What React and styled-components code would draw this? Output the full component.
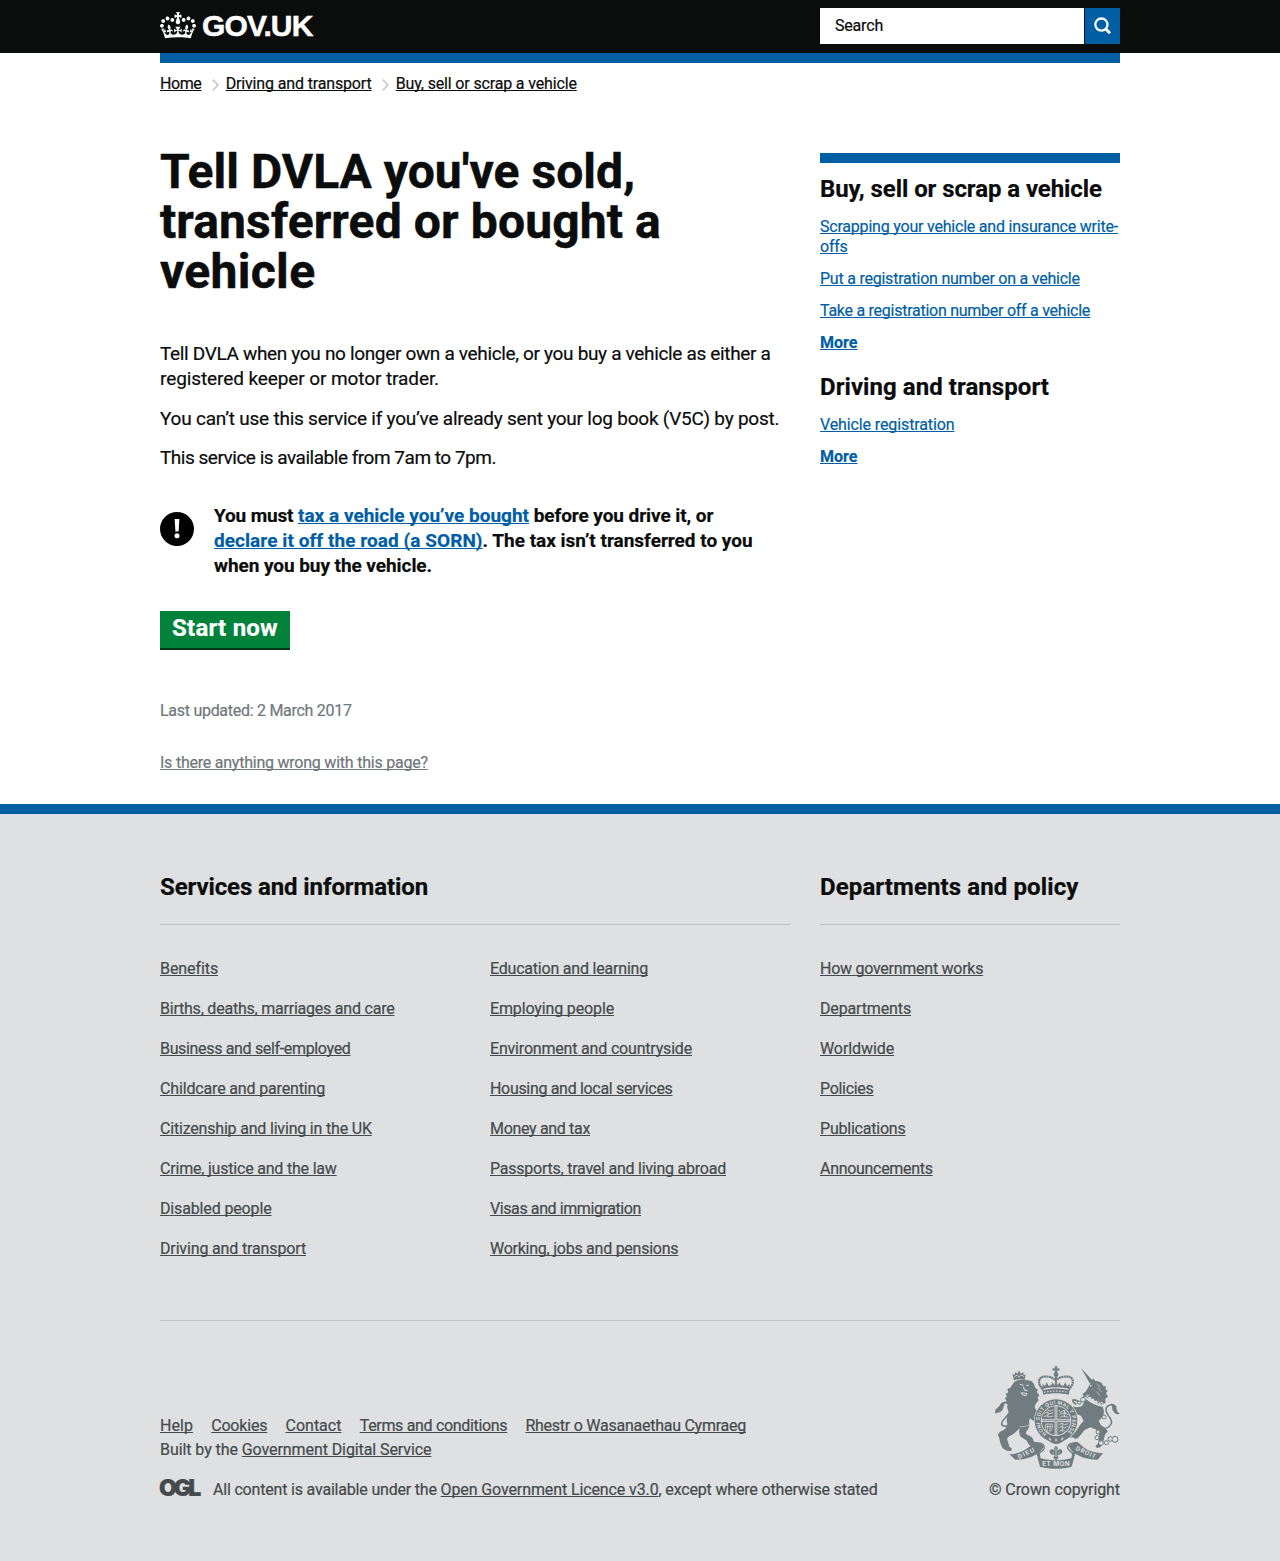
import React from "react";
import styled, { createGlobalStyle, css } from "styled-components";

const colour = {
  black: "#0b0c0c",
  blue: "#005ea5",
  green: "#00823b",
  greenDark: "#003618",
  grey: "#6f777b",
  rule: "#bfc1c3",
  footer: "#dee0e2",
  footerText: "#454a4c",
  arms: "#707c7f",
};

const GlobalStyle = createGlobalStyle`
  *, *::before, *::after { box-sizing: border-box; }
  body {
    margin: 0;
    background: #fff;
    color: ${colour.black};
    font: 400 16px/20px Roboto, "Liberation Sans", sans-serif;
    -webkit-text-stroke: 0.2px;
  }
  svg { -webkit-text-stroke: 0; }
  h1, h2, p, ul { margin: 0; padding: 0; }
  ul { list-style: none; }
`;

const tracking = css`
  letter-spacing: ${(p) => p.$track || 0}px;
`;

const Track = styled.span`
  ${tracking}
  white-space: pre;
`;

const Link = styled.a`
  ${tracking}
  color: ${(p) => p.$color || colour.blue};
  font-weight: ${(p) => (p.$bold ? 700 : "inherit")};
  text-decoration: underline;
  text-decoration-thickness: 1px;
  text-decoration-skip-ink: none;
  text-underline-offset: 1px;
`;

const Header = styled.header`
  height: 53px;
  background: ${colour.black};
`;

const Width = styled.div`
  width: 960px;
  margin: 0 auto;
`;

const HeaderRow = styled(Width)`
  display: flex;
  justify-content: space-between;
  align-items: flex-start;
`;

const Logo = styled.a`
  display: flex;
  gap: 6px;
  padding-top: 12px;
  color: #fff;
`;

const LogoText = styled.span`
  margin-top: -1px;
  font: 700 30px/30px "Liberation Sans", Arial, sans-serif;
  letter-spacing: -0.85px;
  -webkit-text-stroke: 0.5px;
`;

const SearchForm = styled.form`
  display: flex;
  gap: 1px;
  width: 300px;
  height: 36px;
  margin-top: 8px;
`;

const SearchField = styled.div`
  flex: 1;
  padding: 8px 15px;
  background: #fff;
`;

const SearchButton = styled.button`
  display: flex;
  align-items: center;
  justify-content: center;
  width: 35px;
  padding: 0;
  border: 0;
  background: ${colour.blue};
`;

const BlueBar = styled.div`
  height: 10px;
  background: ${colour.blue};
`;

const Breadcrumbs = styled.nav`
  display: flex;
  padding-top: 11px;
`;

const Chevron = styled.svg`
  display: block;
  width: 7px;
  height: 12px;
  margin: 5px 7px 0 10.2px;
`;

const Columns = styled.div`
  display: grid;
  grid-template-columns: 630px 300px;
  column-gap: 30px;
`;

const Article = styled.main`
  padding: 53px 0 31px;
`;

const Title = styled.h1`
  margin-bottom: 44px;
  font-size: 48px;
  line-height: 50px;
  font-weight: 700;
  -webkit-text-stroke: 0.5px;
`;

const Line = styled.span`
  display: block;
  white-space: pre;
  ${tracking}
`;

const Paragraph = styled.p`
  margin-bottom: ${(p) => p.$gap || 15}px;
  font-size: 19px;
  line-height: 25px;
`;

const Callout = styled.div`
  display: flex;
  gap: 20px;
  font-size: 19px;
  line-height: 25px;
  font-weight: 700;
`;

const CalloutIcon = styled.svg`
  width: 34px;
  height: 34px;
  margin-top: 9px;
`;

const StartButton = styled.a`
  display: block;
  width: 130px;
  height: 39px;
  margin-top: 33px;
  padding: 1px 12px 0;
  border-bottom: 2px solid ${colour.greenDark};
  background: ${colour.green};
  color: #fff;
  font-size: 24px;
  line-height: 32px;
  font-weight: 700;
`;

const Meta = styled.p`
  margin-top: ${(p) => p.$top}px;
  color: ${colour.grey};
`;

const Aside = styled.aside`
  padding-top: 59px;
`;

const AsideHeading = styled.h2`
  margin: ${(p) => p.$top}px 0 13px;
  font-size: 24px;
  line-height: 30px;
  font-weight: 700;
`;

const AsideList = styled.ul`
  display: flex;
  flex-direction: column;
  gap: 12px;
`;

const Footer = styled.footer`
  height: 757px;
  border-top: 10px solid ${colour.blue};
  background: ${colour.footer};
  color: ${colour.footerText};
`;

const FooterHeading = styled.h2`
  height: 111px;
  padding-top: 58px;
  border-bottom: 1px solid ${colour.rule};
  color: ${colour.black};
  font-size: 24px;
  line-height: 30px;
  font-weight: 700;
`;

const FooterLists = styled.div`
  display: grid;
  grid-template-columns: repeat(${(p) => p.$cols}, 300px);
  column-gap: 30px;
  padding-top: 34px;
`;

const FooterList = styled.ul`
  display: flex;
  flex-direction: column;
  gap: 20px;
`;

const FooterMeta = styled.div`
  display: flex;
  justify-content: space-between;
  margin-top: 61px;
  border-top: 1px solid ${colour.rule};
`;

const MetaLeft = styled.div`
  padding-top: 95px;
`;

const MetaLinks = styled.ul`
  display: flex;
  justify-content: space-between;
  width: 586px;
`;

const BuiltBy = styled.p`
  margin-top: 4px;
`;

const Licence = styled.div`
  display: flex;
  margin-top: 17px;
`;

const Ogl = styled.span`
  width: 54px;
  margin-left: -1px;
  font: 900 23px/22px Inter, sans-serif;
  letter-spacing: -3px;
`;

const LicenceText = styled.p`
  padding-top: 3px;
  white-space: pre;
`;

const Copyright = styled.div`
  display: flex;
  flex-direction: column;
  align-items: flex-end;
  gap: 11px;
  padding-top: 45px;
`;

const Crown = () => (
  <svg width="36" height="26.5" viewBox="0 0 132 97" fill="currentColor">
    <path d="M25 30.2c3.5 1.5 7.7-.2 9.1-3.7 1.5-3.6-.2-7.8-3.9-9.2-3.6-1.4-7.6.3-9.1 3.9-1.4 3.5.3 7.5 3.9 9zM9 39.5c3.6 1.5 7.8-.2 9.2-3.7 1.5-3.6-.2-7.8-3.9-9.1-3.6-1.5-7.6.2-9.1 3.8-1.4 3.5.3 7.5 3.8 9zM4.4 57.2c3.5 1.5 7.7-.2 9.1-3.8 1.5-3.6-.2-7.7-3.9-9.1-3.5-1.5-7.6.3-9.1 3.8-1.4 3.5.3 7.6 3.9 9.1zm38.3-21.4c3.5 1.5 7.7-.2 9.1-3.8 1.5-3.6-.2-7.7-3.9-9.1-3.6-1.5-7.6.3-9.1 3.8-1.3 3.6.4 7.7 3.9 9.1zm64.4-5.6c-3.6 1.5-7.8-.2-9.1-3.7-1.5-3.6.2-7.8 3.8-9.2 3.6-1.4 7.7.3 9.2 3.9 1.3 3.5-.4 7.5-3.9 9zm15.9 9.3c-3.6 1.5-7.7-.2-9.1-3.7-1.5-3.6.2-7.8 3.7-9.1 3.6-1.5 7.7.2 9.2 3.8 1.5 3.5-.3 7.5-3.8 9zm4.7 17.7c-3.6 1.5-7.8-.2-9.2-3.8-1.5-3.6.2-7.7 3.9-9.1 3.6-1.5 7.7.3 9.2 3.8 1.3 3.5-.4 7.6-3.9 9.1zM89.3 35.8c-3.6 1.5-7.8-.2-9.2-3.8-1.4-3.6.2-7.7 3.9-9.1 3.6-1.5 7.7.3 9.2 3.8 1.4 3.6-.3 7.7-3.9 9.1zM69.7 17.7l8.9 4.7V9.3l-8.9 2.8c-.2-.3-.5-.6-.9-.9L72.4 0H59.6l3.5 11.2c-.3.3-.6.5-.9.9l-8.8-2.8v13.1l8.8-4.7c.3.3.6.7.9.9l-5 15.4v.1c-.2.8-.4 1.6-.4 2.4 0 4.1 3.1 7.5 7 8.1h.2c.3 0 .7.1 1 .1.4 0 .7 0 1-.1h.2c4-.6 7.1-4.1 7.1-8.1 0-.8-.1-1.7-.4-2.4V34l-5.1-15.4c.4-.2.7-.6 1-.9zM66 92.8c16.9 0 32.8 1.1 47.1 3.2 4-16.9 8.9-26.7 14-33.5l-9.6-3.4c1 4.9 1.1 7.2 0 10.2-1.5-1.4-3-4.3-4.2-8.7L108.6 76c2.8-2 5-3.2 7.5-3.3-4.4 9.4-10 11.9-13.6 11.2-4.3-.8-6.3-4.6-5.6-7.9 1-4.7 5.7-5.9 8-.5 4.3-8.7-3-11.4-7.6-8.8 7.1-7.2 7.9-13.5 2.1-21.1-8 6.1-8.1 12.3-4.5 20.8-4.7-5.4-12.1-2.5-9.5 6.2 3.4-5.2 7.9-2 7.2 3.1-.6 4.3-6.4 7.8-13.5 7.2-10.3-.9-10.9-8-11.2-13.8 2.5-.5 7.1 1.8 11 7.3L80.2 60c-4.1 4.4-8 5.3-12.3 5.4 1.4-4.4 8-11.6 8-11.6H55.5s6.4 7.2 7.9 11.6c-4.2-.1-8-1-12.3-5.4l1.4 16.4c3.9-5.5 8.5-7.7 10.9-7.3-.3 5.8-.9 12.8-11.1 13.8-7.2.6-12.9-2.9-13.5-7.2-.7-5 3.8-8.3 7.1-3.1 2.7-8.7-4.6-11.6-9.4-6.2 3.7-8.5 3.6-14.7-4.6-20.8-5.8 7.6-5 13.9 2.2 21.1-4.7-2.6-11.9.1-7.7 8.8 2.3-5.5 7.1-4.2 8.1.5.7 3.3-1.3 7.1-5.7 7.9-3.5.7-9-1.8-13.5-11.2 2.5.1 4.7 1.3 7.5 3.3l-4.7-15.4c-1.2 4.4-2.7 7.2-4.3 8.7-1.1-3-.9-5.3 0-10.2l-9.5 3.4c5 6.9 9.9 16.7 14 33.5 14.8-2.1 30.8-3.2 47.7-3.2z" />
  </svg>
);

const SearchIcon = () => (
  <svg width="20" height="20" viewBox="0 0 20 20" fill="none" stroke="#fff">
    <circle cx="8.4" cy="8.6" r="6.1" strokeWidth="2.3" />
    <path d="M12.6 12.8l4.4 4.4" strokeWidth="3" />
  </svg>
);

const Separator = () => (
  <Chevron viewBox="0 0 7 12" fill="none" stroke={colour.rule} strokeWidth="1.4">
    <path d="M.8.8L6 6 .8 11.2" />
  </Chevron>
);

const RoyalArms = () => (
  <svg width="125" height="103" viewBox="45 33 375 309" fill={colour.arms}>
    {/* crown above the garter */}
    <g>
      <path d="M224 34h8l-1 7 7-2v9l-7-2 1 8h-8l1-8-7 2v-9l7 2z" />
      <circle cx="228" cy="59" r="7" />
      <path
        d="M189 104C170 84 176 66 192 65c17-2 28 4 35 11 8-7 19-13 37-11 16 1 22 19 2 39"
        fill="none"
        stroke={colour.arms}
        strokeWidth="6.5"
        strokeDasharray="6 1.2"
      />
      <path d="M228 66v32" fill="none" stroke={colour.arms} strokeWidth="6" strokeDasharray="5 1.5" />
      <path d="M186 102l2-16 7 8 5-12 6 10 7-1 5-9 5 9 5-11 5 11 5-9 5 9 7 1 6-10 5 12 7-8 2 16c-26-7-58-7-84 0z" />
      <path d="M187 106c27-7 55-7 82 0l-3 13c-24-6-52-6-76 0z" />
      <path d="M192 112c24-5 48-5 72 0" fill="none" stroke={colour.footer} strokeWidth="3" strokeDasharray="5 4" />
    </g>
    {/* lion */}
    <g>
      <path d="M97 56l6 5 3-10 7 5 4-10 5 10 8-4 1 9 6-3-3 16c-11-3-22-2-32 2z" />
      <path d="M103 67c4-8 11-8 14 0 3-8 11-8 15-1" fill="none" stroke={colour.footer} strokeWidth="2.5" />
      <path d="M103 80c12-7 28-8 40-4l11 2 8 9 3 10 8 7-2 8 7 9-5 7 3 8-7 8-5 10 2 8 12 10 6 12-3 14-9 9-10-8-12-9-3 8c3 12 1 22-7 30-4 7-2 11 4 13 12 4 15 10 17 18l7 6-8 8-12-2-9-15-16-10c-7-8-5-16-5-26-8 8-16 18-29 23-7 4-9 9-6 15l5 17 7 5-1 8-14-1-12-7-7-16-4-18-4-5 6-10 17-9 6-14c-3-14-3-25 6-35-6-9-8-18-5-27l-8-2 5-7-6-7 7-5-4-8 8-5-3-10 9-4z" />
      <path d="M120 88l10 3M139 91l7 0M130 95l4 11 9 1M124 113l17 3-3 6-10-2z" fill="none" stroke={colour.footer} strokeWidth="3" />
      <path d="M150 208c-9 6-20 8-31 7" fill="none" stroke={colour.footer} strokeWidth="1.8" />
      <path d="M92 208c-11 7-25 8-27-1-2-14 26-25 26-46 0-20-18-24-29-12" fill="none" stroke={colour.arms} strokeWidth="4.5" />
      <path d="M78 142c-16-3-18 13-30 20-4 4-2 9-2 15 6-6 11-2 18-8 9-7 4-18 14-27z" />
    </g>
    {/* unicorn */}
    <g>
      <path d="M303 39l36 39-10 7z" />
      <path d="M333 80l7-10 6 8c14 0 22 7 24 16l9 0-3 8 7 6-5 7 6 10-8 6 1 12-11 6c-7 0-14-2-20-7-6-4-9-9-9-15l-12 4-8-5-7-1-2-9 9-6 8-13z" />
      <circle cx="332" cy="92" r="2.5" fill={colour.footer} />
      <path d="M350 86l11 12M353 99l12 12M350 110l10 12" stroke={colour.footer} strokeWidth="1.8" />
      <path d="M321 120c12 15 28 22 47 26" fill="none" stroke={colour.footer} strokeWidth="8" />
      <path d="M322 119l5 7 5-6 3 11 7-5 2 11 8-4 2 10 7-3 4 8" fill="none" stroke={colour.arms} strokeWidth="3" />
      <path d="M317 132c15 12 32 20 52 24l3 16c-2 13-9 20-16 26l7 13 13 8 7 10-8 10-7 28-7 10-10 2-5-5 9-9 2-27-6-13-20-8-17 8-18 22-9 5-10-5-9 2-2-7 12-5 9-7 9-15 15-18-8-14c-8-6-17-6-25 1l-12 7-9-3-2-8 8-3 12-2 14-9-19-6-12 2-6-6 2-9 7 0 9 6 22 4 14-3z" />
      <path d="M289 148c-8-5-12-7-10-13 7-2 15 3 20 9" fill="none" stroke={colour.arms} strokeWidth="5" />
      <path d="M366 222c12 0 22-6 27-15 9-14-14-25-15-41 0-17 22-22 31-9" fill="none" stroke={colour.arms} strokeWidth="4.5" />
      <path d="M391 147c15-3 18 12 21 22l7 8c-10 3-16-2-19-8-6-7 0-15-9-22z" />
      <g fill={colour.footer} stroke={colour.arms} strokeWidth="3">
        <circle cx="309" cy="134" r="7" />
        <circle cx="298" cy="143" r="5" />
        <circle cx="372" cy="186" r="6" />
        <circle cx="354" cy="231" r="6" />
        <circle cx="351" cy="248" r="6" />
        <circle cx="363" cy="264" r="7" />
        <circle cx="379" cy="263" r="6" />
        <circle cx="391" cy="252" r="7" />
        <circle cx="405" cy="253" r="9" />
      </g>
    </g>
    {/* garter and shield */}
    <circle cx="228" cy="197" r="66" fill={colour.footer} />
    <circle cx="228" cy="197" r="64" />
    <path id="garterPath" d="M200 237A49 49 0 1 1 256 237" fill="none" />
    <text fill={colour.footer} fontFamily="Inter, sans-serif" fontSize="15" fontWeight="600">
      <textPath href="#garterPath" textLength="240" lengthAdjust="spacing">
        HONI SOIT QUI MAL Y PENSE
      </textPath>
    </text>
    <circle cx="228" cy="197" r="45.5" fill={colour.footer} />
    <circle cx="228" cy="197" r="43" />
    <g fill="none" stroke={colour.footer} strokeWidth="2.4">
      <path d="M228 151v92M183 197h90" strokeWidth="8" />
      <path d="M193 176l10-5 4 6 13-4M192 185l9-3 6 4 13-3M202 165l9 3 10-4M204 173v14" />
      <path d="M237 165l5 7 9-6 8 9M238 178l14-4 13 6M239 188l10-5 16 4M253 165v22" />
      <path d="M236 208l12-3 5 4 12-3M236 218l9-4 8 5 9-5M238 229l8-5 8 3M247 204v27" />
      <path d="M197 207h20c1 15-4 23-13 26-7-5-9-13-7-26zM203 207v23M210 207v22M197 215h20" strokeWidth="2" />
    </g>
    <path d="M228 153v88M186 197h84" stroke={colour.arms} strokeWidth="2.4" />
    <path d="M190 247l13-8c15 8 34 8 50 0l12 9-24 16c-8 4-17 4-25 0z" />
    <path d="M208 249l4 7M228 251v8M249 248l-4 7" stroke={colour.footer} strokeWidth="4" />
    {/* plant badge */}
    <path d="M228 272l6 8-3 10c4-8 11-9 15-4 3 7-2 12-8 13l-6 1 4 9-8 7-8-7 4-9-7-1c-6-1-10-7-7-13 4-5 11-4 15 4l-3-10z" />
    <path d="M228 280v27M218 291l4 5M238 291l-4 5" stroke={colour.footer} strokeWidth="2" />
    {/* motto ribbon */}
    <path d="M88 298c27 0 53-12 75-37 12 0 20 5 29 13l-7 11c-17 18-42 29-79 29z" />
    <path d="M369 295c-28-1-53-9-76-34-11 1-19 5-27 12l7 12c19 19 45 29 80 29z" />
    <path
      d="M168 264c16-2 27 5 24 17-3 9-16 10-19 22M290 263c-18-1-29 7-27 17 4 9 17 13 20 22"
      fill="none"
      stroke={colour.arms}
      strokeWidth="4"
    />
    <path d="M172 306c35 13 76 13 111 0l-8 29c-30 8-64 8-95 0z" />
    <path d="M168 292l6-8 8 22-6 6zM287 292l-6-8-7 22 6 6z" />
    <g fill={colour.footer} fontFamily="Inter, sans-serif" fontWeight="700" fontSize="18">
      <text transform="translate(117 312) rotate(-26)" textLength="53">DIEU</text>
      <text x="187" y="333" textLength="82" fontSize="19">ET MON</text>
      <text transform="translate(286 284) rotate(25)" textLength="64">DROIT</text>
    </g>
  </svg>
);

const crumbs = [
  ["Home", -0.4],
  ["Driving and transport", -0.15],
  ["Buy, sell or scrap a vehicle", -0.155],
];

const related = [
  {
    title: "Buy, sell or scrap a vehicle",
    track: -0.08,
    top: 11,
    links: [
      ["Scrapping your vehicle and insurance write-offs", -0.21],
      ["Put a registration number on a vehicle", -0.23],
      ["Take a registration number off a vehicle", -0.262],
    ],
  },
  {
    title: "Driving and transport",
    track: 0.055,
    top: 19,
    links: [["Vehicle registration", -0.115]],
  },
];

const services = [
  [
    ["Benefits", -0.08],
    ["Births, deaths, marriages and care", -0.22],
    ["Business and self-employed", -0.337],
    ["Childcare and parenting", -0.156],
    ["Citizenship and living in the UK", -0.19],
    ["Crime, justice and the law", -0.2],
    ["Disabled people", -0.144],
    ["Driving and transport", -0.147],
  ],
  [
    ["Education and learning", -0.205],
    ["Employing people", -0.139],
    ["Environment and countryside", -0.188],
    ["Housing and local services", -0.321],
    ["Money and tax", -0.328],
    ["Passports, travel and living abroad", -0.235],
    ["Visas and immigration", -0.406],
    ["Working, jobs and pensions", -0.25],
  ],
];

const departments = [
  ["How government works", -0.26],
  ["Departments", -0.142],
  ["Worldwide", -0.08],
  ["Policies", -0.301],
  ["Publications", -0.217],
  ["Announcements", -0.3],
];

const metaLinks = [
  ["Help", 0.055],
  ["Cookies", -0.201],
  ["Contact", 0.011],
  ["Terms and conditions", -0.328],
  ["Rhestr o Wasanaethau Cymraeg", -0.253],
];

const LinkItems = ({ items, color }) =>
  items.map(([label, track]) => (
    <li key={label}>
      <Link href="#" $color={color} $track={track}>
        {label}
      </Link>
    </li>
  ));

export default function App() {
  return (
    <>
      <GlobalStyle />
      <Header>
        <HeaderRow>
          <Logo>
            <Crown />
            <LogoText>GOV.UK</LogoText>
          </Logo>
          <SearchForm>
            <SearchField>
              <Track $track={-0.19}>Search</Track>
            </SearchField>
            <SearchButton type="button" aria-label="Search">
              <SearchIcon />
            </SearchButton>
          </SearchForm>
        </HeaderRow>
      </Header>
      <Width>
        <BlueBar />
        <Breadcrumbs>
          {crumbs.map(([label, track], i) => (
            <React.Fragment key={label}>
              {i > 0 && <Separator />}
              <Link href="#" $color={colour.black} $track={track}>
                {label}
              </Link>
            </React.Fragment>
          ))}
        </Breadcrumbs>
        <Columns>
          <Article>
            <Title>
              <Line $track={0.04}>Tell DVLA you've sold,</Line>
              <Line $track={0.12}>transferred or bought a</Line>
              <Line $track={0.32}>vehicle</Line>
            </Title>
            <Paragraph>
              <Line $track={-0.334}>
                Tell DVLA when you no longer own a vehicle, or you buy a vehicle as either a
              </Line>
              <Line $track={-0.094}>registered keeper or motor trader.</Line>
            </Paragraph>
            <Paragraph $gap={14}>
              <Line $track={-0.23}>
                You can’t use this service if you’ve already sent your log book (V5C) by post.
              </Line>
            </Paragraph>
            <Paragraph $gap={33}>
              <Line $track={-0.487}>This service is available from 7am to 7pm.</Line>
            </Paragraph>
            <Callout>
              <CalloutIcon viewBox="0 0 34 34">
                <circle cx="17" cy="17" r="17" />
                <path d="M14.6 7h4.8l-.8 12.4h-3.2z" fill="#fff" />
                <circle cx="17" cy="23.7" r="2.5" fill="#fff" />
              </CalloutIcon>
              <div>
                <Line>
                  <Track $track={-0.141}>You must </Track>
                  <Link href="#" $track={0.006}>tax a vehicle you’ve bought</Link>
                  <Track $track={-0.075}> before you drive it, or</Track>
                </Line>
                <Line>
                  <Link href="#" $track={0.06}>declare it off the road (a SORN)</Link>
                  <Track $track={-0.012}>. The tax isn’t transferred to you</Track>
                </Line>
                <Line $track={-0.062}>when you buy the vehicle.</Line>
              </div>
            </Callout>
            <StartButton>
              <Track $track={0.24}>Start now</Track>
            </StartButton>
            <Meta $top={51}>
              <Track $track={-0.28}>Last updated: 2 March 2017</Track>
            </Meta>
            <Meta $top={32}>
              <Link href="#" $color={colour.grey} $track={-0.23}>
                Is there anything wrong with this page?
              </Link>
            </Meta>
          </Article>
          <Aside>
            <BlueBar />
            {related.map((group) => (
              <section key={group.title}>
                <AsideHeading $top={group.top}>
                  <Track $track={group.track}>{group.title}</Track>
                </AsideHeading>
                <AsideList>
                  <LinkItems items={group.links} />
                  <li>
                    <Link href="#" $bold $track={0.03}>More</Link>
                  </li>
                </AsideList>
              </section>
            ))}
          </Aside>
        </Columns>
      </Width>
      <Footer>
        <Width>
          <Columns>
            <section>
              <FooterHeading>
                <Track $track={-0.109}>Services and information</Track>
              </FooterHeading>
              <FooterLists $cols={2}>
                {services.map((items) => (
                  <FooterList key={items[0][0]}>
                    <LinkItems items={items} color={colour.footerText} />
                  </FooterList>
                ))}
              </FooterLists>
            </section>
            <section>
              <FooterHeading>
                <Track $track={0.108}>Departments and policy</Track>
              </FooterHeading>
              <FooterLists $cols={1}>
                <FooterList>
                  <LinkItems items={departments} color={colour.footerText} />
                </FooterList>
              </FooterLists>
            </section>
          </Columns>
          <FooterMeta>
            <MetaLeft>
              <MetaLinks>
                <LinkItems items={metaLinks} color={colour.footerText} />
              </MetaLinks>
              <BuiltBy>
                <Track $track={-0.07}>Built by the </Track>
                <Link href="#" $color={colour.footerText} $track={-0.09}>
                  Government Digital Service
                </Link>
              </BuiltBy>
              <Licence>
                <Ogl>OGL</Ogl>
                <LicenceText>
                  <Track $track={-0.19}>All content is available under the </Track>
                  <Link href="#" $color={colour.footerText} $track={-0.112}>
                    Open Government Licence v3.0
                  </Link>
                  <Track $track={-0.169}>, except where otherwise stated</Track>
                </LicenceText>
              </Licence>
            </MetaLeft>
            <Copyright>
              <RoyalArms />
              <Track $track={-0.087}>© Crown copyright</Track>
            </Copyright>
          </FooterMeta>
        </Width>
      </Footer>
    </>
  );
}
